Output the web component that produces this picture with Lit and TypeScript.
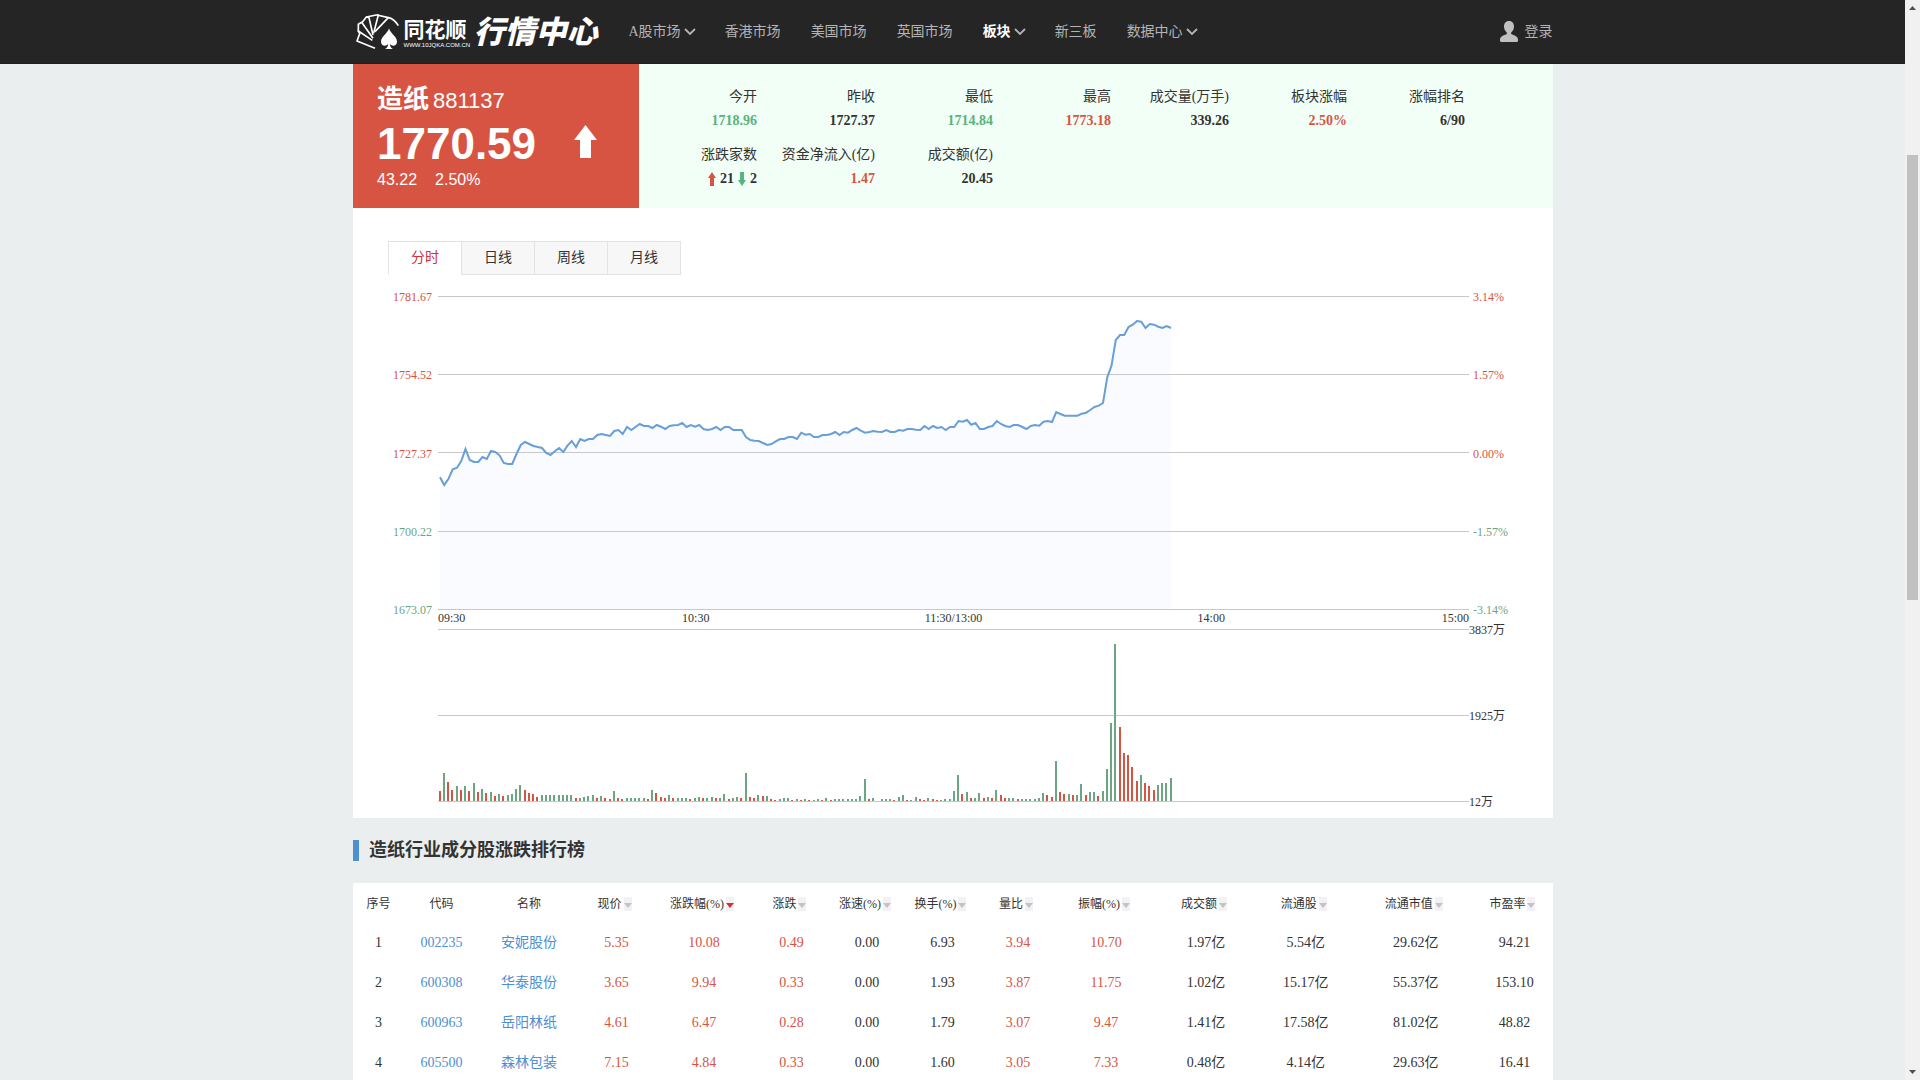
import { LitElement, html, svg, css } from "lit";
import { customElement, state } from "lit/decorators.js";
import { classMap } from "lit/directives/class-map.js";

/* Minute prices, in thirds of a pixel below the top grid line's origin. */
const PRICES = [
  592, 615, 596, 568, 563, 543, 507, 540, 546, 546, 531, 537, 513, 516, 526, 549, 552, 552, 522, 495,
  486, 492, 498, 501, 504, 519, 525, 514, 504, 516, 497, 483, 501, 477, 483, 477, 477, 465, 462, 465,
  468, 453, 450, 462, 441, 450, 441, 432, 438, 438, 444, 435, 440, 447, 438, 436, 435, 429, 441, 435,
  440, 435, 447, 450, 447, 441, 450, 441, 441, 450, 450, 450, 471, 480, 482, 483, 489, 495, 492, 484,
  477, 477, 471, 471, 477, 458, 464, 462, 471, 471, 465, 465, 462, 456, 465, 456, 458, 450, 444, 452,
  458, 456, 453, 455, 456, 450, 456, 456, 450, 452, 447, 447, 449, 450, 438, 447, 438, 444, 441, 450,
  441, 441, 423, 425, 420, 434, 429, 447, 447, 441, 438, 423, 432, 438, 441, 435, 435, 441, 447, 438,
  435, 437, 425, 423, 426, 396, 402, 407, 407, 407, 407, 401, 398, 390, 381, 377, 369, 292, 257, 180,
  165, 165, 141, 134, 123, 125, 144, 132, 134, 140, 144, 138, 144,
];

/* Minute volumes as bar heights; negative values are drawn red. */
const VOLUMES = [
  -10, 28, -19, -11, 15, -11, 15, -10, 18, -9, 12, -8, 9, -5, 7, -5, 6, 7, 12, 16,
  -11, -8, -7, -4, 6, 6, 6, 6, 6, 6, 6, 6, -3, 3, 4, 5, 6, -3, 5, -3,
  -2, 10, -3, -2, 3, 3, 3, 3, 3, -2, 11, -8, -4, -3, 6, -3, 3, 3, 3, -2,
  3, 4, -3, 3, 4, -3, 3, 7, -2, 3, 4, -3, 28, -4, -3, 6, -5, 5, -2, -1,
  2, 3, 3, -1, 2, -1, 2, -1, 1, 2, -1, 3, -1, 2, 2, 2, 2, 2, 2, 5,
  22, -2, 3, 0, 2, 2, 2, -1, 4, 6, -1, 1, 4, -2, -1, 3, -2, -1, 1, 2,
  2, 10, 26, -7, 9, -3, 3, 8, -3, 4, -3, 11, -6, -3, 3, 3, -2, 2, 2, 2,
  2, 3, 8, -6, -4, 40, -9, -7, 7, -6, 6, 17, -6, 9, 9, -5, 10, 32, 78, 157,
  -74, -48, -46, -34, -20, 26, -18, -15, -11, 16, 18, 18, 23,
];

const STEP = 4.25;

const NAV = [
  { text: "A股市场", more: true },
  { text: "香港市场" },
  { text: "美国市场" },
  { text: "英国市场" },
  { text: "板块", more: true, active: true },
  { text: "新三板" },
  { text: "数据中心", more: true },
];

const STATS = [
  { label: "今开", value: "1718.96", tone: "down" },
  { label: "昨收", value: "1727.37", tone: "" },
  { label: "最低", value: "1714.84", tone: "down" },
  { label: "最高", value: "1773.18", tone: "up" },
  { label: "成交量(万手)", value: "339.26", tone: "" },
  { label: "板块涨幅", value: "2.50%", tone: "up" },
  { label: "涨幅排名", value: "6/90", tone: "" },
  { label: "涨跌家数", rise: "21", fall: "2", tone: "" },
  { label: "资金净流入(亿)", value: "1.47", tone: "up" },
  { label: "成交额(亿)", value: "20.45", tone: "" },
];

const TABS = ["分时", "日线", "周线", "月线"];

const COLUMNS = [
  { text: "序号", width: 51 },
  { text: "代码", width: 75 },
  { text: "名称", width: 100 },
  { text: "现价", width: 75, sort: true },
  { text: "涨跌幅(%)", width: 100, sort: true, active: true },
  { text: "涨跌", width: 75, sort: true },
  { text: "涨速(%)", width: 76, sort: true },
  { text: "换手(%)", width: 75, sort: true },
  { text: "量比", width: 76, sort: true },
  { text: "振幅(%)", width: 100, sort: true },
  { text: "成交额", width: 100, sort: true },
  { text: "流通股", width: 100, sort: true },
  { text: "流通市值", width: 120, sort: true },
  { text: "市盈率", width: 77, sort: true },
];

const ROWS = [
  ["1", "002235", "安妮股份", "5.35", "10.08", "0.49", "0.00", "6.93", "3.94", "10.70", "1.97亿", "5.54亿", "29.62亿", "94.21"],
  ["2", "600308", "华泰股份", "3.65", "9.94", "0.33", "0.00", "1.93", "3.87", "11.75", "1.02亿", "15.17亿", "55.37亿", "153.10"],
  ["3", "600963", "岳阳林纸", "4.61", "6.47", "0.28", "0.00", "1.79", "3.07", "9.47", "1.41亿", "17.58亿", "81.02亿", "48.82"],
  ["4", "605500", "森林包装", "7.15", "4.84", "0.33", "0.00", "1.60", "3.05", "7.33", "0.48亿", "4.14亿", "29.63亿", "16.41"],
];

const RED_COLUMNS = [3, 4, 5, 8, 9];

@customElement("site-header")
class SiteHeader extends LitElement {
  static styles = css`
    :host {
      display: block;
      background: #252525;
      border-bottom: 1px solid #1f1f20;
    }
    .inner {
      display: flex;
      align-items: center;
      width: 100%;
      max-width: 1200px;
      height: 63px;
      margin: 0 auto;
    }
    a {
      color: #b4b4b4;
      text-decoration: none;
    }
    .logo {
      display: flex;
      align-items: center;
      gap: 4px;
      width: 276px;
      padding-left: 2px;
      box-sizing: border-box;
      color: #fff;
      font-family: "Liberation Sans", "Noto Sans CJK SC", sans-serif;
    }
    .cards {
      width: 45px;
      height: 38px;
    }
    .brand {
      display: flex;
      flex-direction: column;
      width: 66px;
      padding-top: 4px;
      white-space: nowrap;
    }
    .brand-name {
      font-size: 21px;
      line-height: 22px;
      font-weight: 700;
    }
    .brand-url {
      font-size: 6px;
      line-height: 8px;
    }
    .site {
      padding-top: 2px;
      font-size: 31px;
      line-height: 36px;
      font-weight: 900;
      font-style: italic;
      white-space: nowrap;
    }
    nav {
      display: flex;
      flex: 1;
      gap: 30px;
      font-size: 14px;
      line-height: 20px;
    }
    .item {
      display: flex;
      align-items: center;
      white-space: nowrap;
    }
    .item.active {
      color: #fff;
      font-weight: 700;
    }
    .chevron {
      width: 10px;
      height: 7px;
      margin-left: 4px;
      overflow: visible;
      fill: none;
      stroke: #b4b4b4;
      stroke-width: 1.8;
    }
    .login {
      display: flex;
      align-items: center;
      gap: 7px;
      font-size: 14px;
      line-height: 20px;
    }
    .person {
      width: 18px;
      height: 21px;
      fill: #c0c0c0;
    }
  `;

  render() {
    return html`
      <div class="inner">
        <a class="logo" href="#">
          <svg class="cards" viewBox="30 36 135 114" aria-hidden="true">
            <g fill="none" stroke="#fff" stroke-width="5" stroke-linejoin="round">
              <path d="M90 142 L36 120 L44 98 L40 90 L82 118" />
              <path d="M40 92 L40 70 L50 64 L84 112" />
              <path d="M50 66 L64 48 L72 50 L84 102" />
              <path d="M64 48 L94 42 L100 42 L86 96" />
              <path d="M96 42 L130 50 L90 92" />
              <path d="M130 50 Q146 52 160 74" />
            </g>
            <path fill="#fff" d="M132 82 C136 98 156 106 156 122 C156 134 142 138 135 129 C135 137 138 141 144 144 H120 C126 141 129 137 129 129 C122 138 108 134 108 122 C108 106 128 98 132 82 Z" />
          </svg>
          <span class="brand">
            <span class="brand-name">同花顺</span>
            <span class="brand-url">WWW.10JQKA.COM.CN</span>
          </span>
          <span class="site">行情中心</span>
        </a>
        <nav>
          ${NAV.map(
            (n) => html`<a class=${classMap({ item: true, active: !!n.active })} href="#"
              >${n.text}${n.more
                ? html`<svg class="chevron" viewBox="0 0 10 7" aria-hidden="true"><path d="M0 1 L5 6 L10 1" /></svg>`
                : ""}</a
            >`,
          )}
        </nav>
        <a class="login" href="#">
          <svg class="person" viewBox="0 0 18 21" aria-hidden="true">
            <path d="M9 0 C12.500 0 14 2.500 14 5.500 C14 8 12.800 10.300 11.200 11.400 V13 C13 14.200 18 14.800 18 18.500 V20 Q18 21 16.500 21 H1.500 Q0 21 0 20 V18.500 C0 14.800 5 14.200 6.800 13 V11.400 C5.200 10.300 4 8 4 5.500 C4 2.500 5.500 0 9 0 Z" />
          </svg>
          登录
        </a>
      </div>
    `;
  }
}

@customElement("board-quote")
class BoardQuote extends LitElement {
  static styles = css`
    :host {
      display: flex;
      min-height: 144px;
      background: #f1fff6;
    }
    .price {
      display: flex;
      align-items: center;
      width: 286px;
      padding: 16px 42px 16px 24px;
      box-sizing: border-box;
      justify-content: space-between;
      background: #d75442;
      color: #fff;
      font-family: "Liberation Sans", "Noto Sans CJK SC", sans-serif;
    }
    h1 {
      display: flex;
      align-items: baseline;
      gap: 4px;
      margin: 0;
      font-size: 26px;
      line-height: 38px;
      font-weight: 700;
    }
    .code {
      font-size: 22px;
      font-weight: 400;
    }
    .last {
      font-size: 44px;
      line-height: 48px;
      font-weight: 700;
    }
    .change {
      display: flex;
      gap: 18px;
      font-size: 16px;
      line-height: 24px;
    }
    .big-arrow {
      width: 23px;
      height: 33px;
      margin-top: 10px;
      fill: #fff;
    }
    .stats {
      display: grid;
      grid-template-columns: repeat(7, 118px);
      grid-auto-rows: 58px;
      margin: 0;
      padding-top: 21px;
      font-size: 14px;
      line-height: 24px;
      text-align: right;
      white-space: nowrap;
    }
    dt {
      color: #333;
    }
    dd {
      display: flex;
      align-items: center;
      justify-content: flex-end;
      gap: 4px;
      margin: 0;
      font-weight: 700;
      color: #333;
    }
    .up {
      color: #d75442;
      fill: #d75442;
    }
    .down {
      color: #58b37e;
      fill: #58b37e;
    }
    .small-arrow {
      width: 8px;
      height: 14px;
    }
  `;

  render() {
    return html`
      <section class="price">
        <div>
          <h1>造纸<span class="code">881137</span></h1>
          <div class="last">1770.59</div>
          <div class="change"><span>43.22</span><span>2.50%</span></div>
        </div>
        <svg class="big-arrow" viewBox="0 0 23 33" aria-hidden="true">
          <path d="M11.500 0 L23 15 H17 V33 H6 V15 H0 Z" />
        </svg>
      </section>
      <dl class="stats">
        ${STATS.map(
          (s) => html`<div>
            <dt>${s.label}</dt>
            <dd class=${s.tone}>
              ${s.rise
                ? html`<svg class="small-arrow up" viewBox="0 0 8 14" aria-hidden="true"><path d="M4 0 L8 6 H6 V14 H2 V6 H0 Z" /></svg>
                    <span>${s.rise}</span>
                    <svg class="small-arrow down" viewBox="0 0 8 14" aria-hidden="true"><path d="M4 14 L8 8 H6 V0 H2 V8 H0 Z" /></svg>
                    <span>${s.fall}</span>`
                : s.value}
            </dd>
          </div>`,
        )}
      </dl>
    `;
  }
}

@customElement("minute-chart")
class MinuteChart extends LitElement {
  static styles = css`
    :host {
      display: grid;
      grid-template-columns: 85px 1fr 84px;
      grid-template-rows: 314px 19px 173px;
      font-size: 12px;
      line-height: 16px;
      color: #333;
    }
    svg {
      display: block;
      width: 100%;
      height: 100%;
    }
    .scale {
      display: flex;
      flex-direction: column;
      justify-content: space-between;
      margin: -7px 0 -8px;
    }
    .left {
      align-items: flex-end;
      padding-right: 6px;
    }
    .right {
      padding-left: 4px;
    }
    .volume-scale {
      grid-column: 3;
    }
    .up {
      color: #d75442;
    }
    .down {
      color: #6ba583;
    }
    .times {
      display: grid;
      grid-column: 2;
      grid-template-columns: 1fr 2fr 2fr 2fr 1fr;
      align-items: start;
      text-align: center;
    }
    .times :first-child {
      text-align: left;
    }
    .times :last-child {
      text-align: right;
    }
    .volume {
      grid-column: 2;
    }
    .grid {
      fill: #c8c8c8;
      shape-rendering: crispEdges;
    }
    .area {
      fill: #f9fbff;
    }
    .line {
      fill: none;
      stroke: #689fd8;
      stroke-width: 2;
    }
    .bar-up {
      fill: #6ba583;
      shape-rendering: crispEdges;
    }
    .bar-down {
      fill: #d75442;
      shape-rendering: crispEdges;
    }
  `;

  render() {
    const points = PRICES.map((v, i) => `${2 + i * STEP},${((v - 48) / 3).toFixed(1)}`).join(" ");
    const end = 2 + (PRICES.length - 1) * STEP;
    return html`
      <div class="scale left">
        <span class="up">1781.67</span><span class="up">1754.52</span><span class="up">1727.37</span>
        <span class="down">1700.22</span><span class="down">1673.07</span>
      </div>
      <svg viewBox="0 0 1031 314" preserveAspectRatio="none" role="img" aria-label="分时">
        <polygon class="area" points="2,313 ${points} ${end},313"></polygon>
        ${[0, 78, 156, 235, 313].map((y) => svg`<rect class="grid" x="0" y=${y} width="1031" height="1" />`)}
        <polyline class="line" points=${points}></polyline>
      </svg>
      <div class="scale right">
        <span class="up">3.14%</span><span class="up">1.57%</span><span class="up">0.00%</span>
        <span class="down">-1.57%</span><span class="down">-3.14%</span>
      </div>
      <div class="times">
        <span>09:30</span><span>10:30</span><span>11:30/13:00</span><span>14:00</span><span>15:00</span>
      </div>
      <svg class="volume" viewBox="0 0 1031 173" preserveAspectRatio="none" role="img" aria-label="成交量">
        ${[0, 86, 172].map((y) => svg`<rect class="grid" x="0" y=${y} width="1031" height="1" />`)}
        ${VOLUMES.map((v, i) => {
          const h = Math.abs(v);
          return svg`<rect class=${v < 0 ? "bar-down" : "bar-up"} x=${Math.floor(1 + i * STEP)} y=${172 - h} width="2" height=${h} />`;
        })}
      </svg>
      <div class="scale volume-scale"><span>3837万</span><span>1925万</span><span>12万</span></div>
    `;
  }
}

@customElement("rank-table")
class RankTable extends LitElement {
  static styles = css`
    :host {
      display: block;
    }
    h2 {
      display: flex;
      align-items: center;
      gap: 10px;
      margin: 22px 0;
      font-size: 18px;
      line-height: 21px;
      font-weight: 700;
      color: #333;
    }
    h2::before {
      content: "";
      width: 6px;
      height: 21px;
      background: #4e8fd0;
    }
    table {
      width: 100%;
      table-layout: fixed;
      border-collapse: collapse;
      background: #fff;
      color: #333;
      text-align: center;
      white-space: nowrap;
    }
    th,
    td {
      box-sizing: border-box;
      height: 40px;
      padding: 2px 0 0;
      font-size: 14px;
      line-height: 20px;
    }
    th {
      height: 39px;
      font-size: 12px;
      font-weight: 400;
    }
    .sort {
      display: inline-flex;
      align-items: center;
      gap: 2px;
      padding: 0 4px 0 0;
      border: 0;
      background: none;
      color: inherit;
      font: inherit;
      line-height: 20px;
    }
    .mark {
      width: 8px;
      height: 14px;
      background: #f3f1f4;
      fill: #c4c2c6;
    }
    .mark.active {
      fill: #cf3338;
    }
    a {
      color: #4e8fd0;
      text-decoration: none;
    }
    .up {
      color: #d75442;
    }
  `;

  render() {
    return html`
      <h2>造纸行业成分股涨跌排行榜</h2>
      <table>
        <colgroup>
          ${COLUMNS.map((c) => html`<col style="width:${(c.width / 12).toFixed(2)}%" />`)}
        </colgroup>
        <thead>
          <tr>
            ${COLUMNS.map(
              (c) => html`<th scope="col">
                ${c.sort
                  ? html`<button class="sort" type="button">
                      ${c.text}<svg class=${classMap({ mark: true, active: !!c.active })} viewBox="0 0 8 14" aria-hidden="true">
                        <path d="M0 6 H8 L4 11 Z" />
                      </svg>
                    </button>`
                  : c.text}
              </th>`,
            )}
          </tr>
        </thead>
        <tbody>
          ${ROWS.map(
            (row) => html`<tr>
              ${row.map(
                (cell, i) => html`<td class=${RED_COLUMNS.includes(i) ? "up" : ""}>
                  ${i === 1 || i === 2 ? html`<a href="#">${cell}</a>` : cell}
                </td>`,
              )}
            </tr>`,
          )}
        </tbody>
      </table>
    `;
  }
}

@customElement("app-root")
class AppRoot extends LitElement {
  static styles = css`
    :host {
      display: flex;
      height: 100vh;
      overflow: hidden;
      background: #eaeeef;
      font-family: "Liberation Serif", "Noto Sans CJK SC", serif;
    }
    .page {
      flex: 1;
      min-width: 0;
      overflow: hidden;
    }
    main {
      box-sizing: border-box;
      width: 100%;
      max-width: 1201px;
      margin: 0 auto;
      padding-left: 1px;
    }
    .panel {
      padding-bottom: 16px;
      background: #fff;
    }
    .tabs {
      display: flex;
      padding: 33px 0 21px 35px;
    }
    .tab {
      width: 73px;
      height: 34px;
      padding: 0;
      border: 1px solid #e3e3e3;
      border-right: 0;
      background: #f7f7f7;
      color: #333;
      font-family: inherit;
      font-size: 14px;
      line-height: 20px;
    }
    .tab:last-child {
      width: 74px;
      border-right: 1px solid #e3e3e3;
    }
    .tab.active {
      border-bottom-color: #fff;
      background: #fff;
      color: #cf3338;
    }
    .scrollbar {
      display: flex;
      flex-direction: column;
      align-items: center;
      width: 15px;
      background: #f1f1f1;
    }
    .arrow {
      width: 15px;
      height: 17px;
      fill: #505050;
    }
    .before {
      flex: 138;
    }
    .thumb {
      flex: 445;
      width: 11px;
      background: #c1c1c1;
    }
    .after {
      flex: 463;
    }
  `;

  @state() private tab = 0;

  render() {
    return html`
      <div class="page">
        <site-header></site-header>
        <main>
          <board-quote></board-quote>
          <div class="panel">
            <div class="tabs">
              ${TABS.map(
                (t, i) => html`<button
                  type="button"
                  class=${classMap({ tab: true, active: i === this.tab })}
                  @click=${() => (this.tab = i)}
                >
                  ${t}
                </button>`,
              )}
            </div>
            <minute-chart></minute-chart>
          </div>
          <rank-table></rank-table>
        </main>
      </div>
      <div class="scrollbar" aria-hidden="true">
        <svg class="arrow" viewBox="0 0 15 17"><path d="M7.500 6 L11 10 H4 Z" /></svg>
        <div class="before"></div>
        <div class="thumb"></div>
        <div class="after"></div>
        <svg class="arrow" viewBox="0 0 15 17"><path d="M7.500 11 L11 7 H4 Z" /></svg>
      </div>
    `;
  }
}
